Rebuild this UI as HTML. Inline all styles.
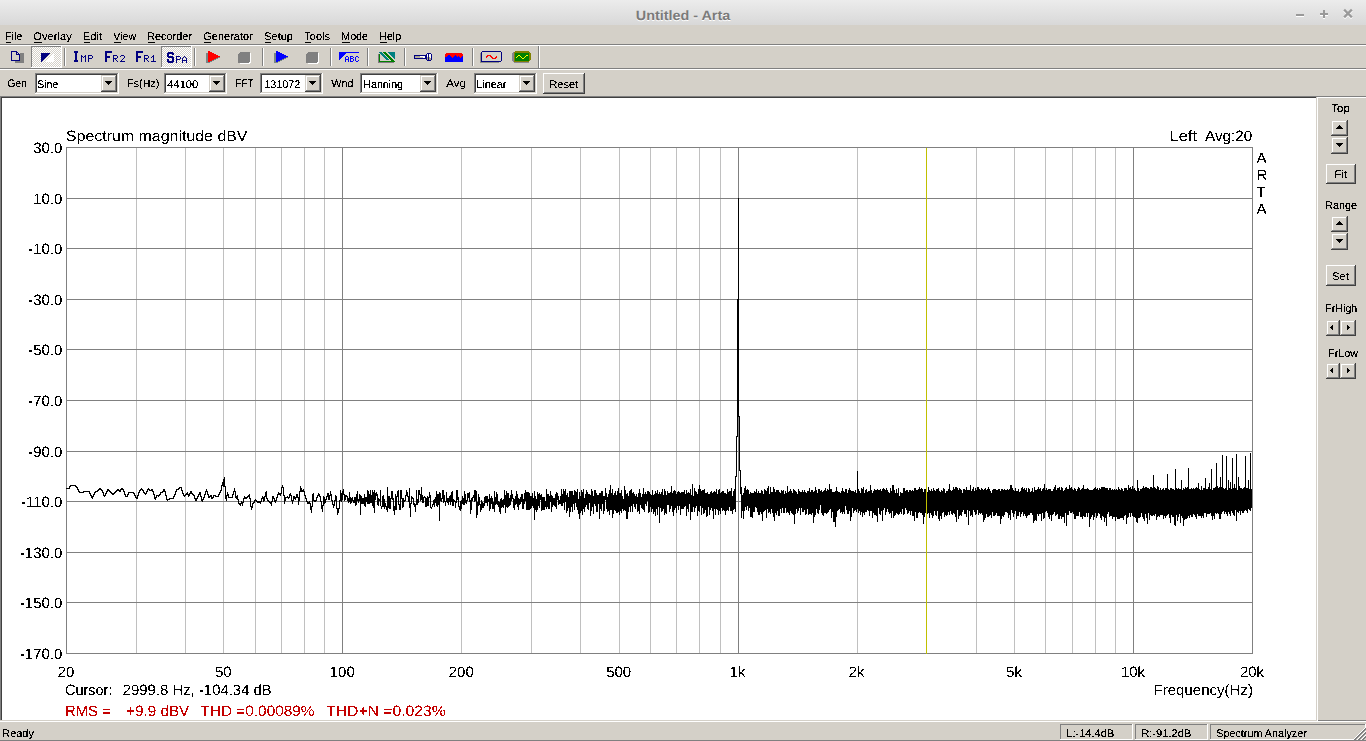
<!DOCTYPE html>
<html><head><meta charset="utf-8"><title>Untitled - Arta</title>
<style>
html,body{margin:0;padding:0;background:#d4d0c8;overflow:hidden}
svg{display:block;font-family:"Liberation Sans",sans-serif}
text{white-space:pre}
</style></head><body>
<svg width="1366" height="741" viewBox="0 0 1366 741" shape-rendering="crispEdges" text-rendering="geometricPrecision">
<defs>
<linearGradient id="tb" x1="0" y1="0" x2="0" y2="1"><stop offset="0" stop-color="#ececec"/><stop offset="1" stop-color="#d8d8d8"/></linearGradient>
<pattern id="chk" width="2" height="2" patternUnits="userSpaceOnUse"><rect width="2" height="2" fill="#d4d0c8"/><rect width="1" height="1" fill="#fff"/><rect x="1" y="1" width="1" height="1" fill="#fff"/></pattern>
<filter id="th" x="0" y="0" width="1" height="1" filterUnits="objectBoundingBox" color-interpolation-filters="sRGB"><feComponentTransfer><feFuncA type="discrete" tableValues="0 0 0 0 0 0 0 0 1 1 1 1 1 1 1 1 1 1 1 1"/></feComponentTransfer></filter>
<filter id="th2" x="0" y="0" width="1" height="1" color-interpolation-filters="sRGB"><feComponentTransfer><feFuncA type="discrete" tableValues="0 0 0 0 0 0 0 0 0 1 1 1 1 1 1 1 1 1 1 1"/></feComponentTransfer></filter>
</defs>
<rect x="0" y="0" width="1366" height="741" fill="#d4d0c8"/>
<rect x="0" y="0" width="1366" height="25" fill="url(#tb)"/>
<g shape-rendering="auto" id="ttl">
<text x="683" y="20.6" font-size="13.6" fill="#ffffff" text-anchor="middle" textLength="94.5" lengthAdjust="spacingAndGlyphs" font-weight="bold">Untitled - Arta</text>
<text x="683" y="19.6" font-size="13.6" fill="#7a7a7a" text-anchor="middle" textLength="94.5" lengthAdjust="spacingAndGlyphs" font-weight="bold">Untitled - Arta</text>
</g>
<rect x="1296" y="15" width="8" height="2" fill="#ffffff"/>
<rect x="1320" y="14" width="8" height="2" fill="#ffffff"/>
<rect x="1323" y="11" width="2" height="8" fill="#ffffff"/>
<path d="M1345 11.5 L1351 17.5 M1351 11.5 L1345 17.5" stroke="#ffffff" stroke-width="2.4" stroke-linecap="square" fill="none" shape-rendering="auto"/>
<rect x="1296" y="14" width="8" height="2" fill="#999999"/>
<rect x="1320" y="13" width="8" height="2" fill="#999999"/>
<rect x="1323" y="10" width="2" height="8" fill="#999999"/>
<path d="M1345 10.5 L1351 16.5 M1351 10.5 L1345 16.5" stroke="#999999" stroke-width="2.4" stroke-linecap="square" fill="none" shape-rendering="auto"/>
<g shape-rendering="auto" filter="url(#th)">
<text x="5.25" y="40" font-size="11" fill="#000" textLength="17.0" lengthAdjust="spacingAndGlyphs">File</text>
<text x="33.25" y="40" font-size="11" fill="#000" textLength="38.7" lengthAdjust="spacingAndGlyphs">Overlay</text>
<text x="83.25" y="40" font-size="11" fill="#000" textLength="18.7" lengthAdjust="spacingAndGlyphs">Edit</text>
<text x="113.25" y="40" font-size="11" fill="#000" textLength="23.1" lengthAdjust="spacingAndGlyphs">View</text>
<text x="147.25" y="40" font-size="11" fill="#000" textLength="44.6" lengthAdjust="spacingAndGlyphs">Recorder</text>
<text x="203.25" y="40" font-size="11" fill="#000" textLength="49.5" lengthAdjust="spacingAndGlyphs">Generator</text>
<text x="264.25" y="40" font-size="11" fill="#000" textLength="28.6" lengthAdjust="spacingAndGlyphs">Setup</text>
<text x="304.25" y="40" font-size="11" fill="#000" textLength="25.8" lengthAdjust="spacingAndGlyphs">Tools</text>
<text x="341.25" y="40" font-size="11" fill="#000" textLength="26.8" lengthAdjust="spacingAndGlyphs">Mode</text>
<text x="379.25" y="40" font-size="11" fill="#000" textLength="21.8" lengthAdjust="spacingAndGlyphs">Help</text>
</g>
<rect x="6" y="42" width="5" height="1" fill="#000"/>
<rect x="34" y="42" width="8" height="1" fill="#000"/>
<rect x="84" y="42" width="6" height="1" fill="#000"/>
<rect x="114" y="42" width="7" height="1" fill="#000"/>
<rect x="148" y="42" width="7" height="1" fill="#000"/>
<rect x="204" y="42" width="7" height="1" fill="#000"/>
<rect x="265" y="42" width="6" height="1" fill="#000"/>
<rect x="305" y="42" width="6" height="1" fill="#000"/>
<rect x="342" y="42" width="8" height="1" fill="#000"/>
<rect x="380" y="42" width="7" height="1" fill="#000"/>
<rect x="0" y="44" width="1366" height="1" fill="#808080"/>
<rect x="0" y="45" width="1366" height="1" fill="#ffffff"/>
<rect x="0" y="68" width="1366" height="1" fill="#808080"/>
<rect x="0" y="69" width="1366" height="1" fill="#ffffff"/>
<rect x="538" y="46" width="1" height="22" fill="#808080"/>
<rect x="539" y="46" width="1" height="22" fill="#ffffff"/>
<g shape-rendering="auto" filter="url(#th)">
<text x="7.25" y="87" font-size="11" fill="#000" textLength="19.7" lengthAdjust="spacingAndGlyphs">Gen</text>
</g>
<rect x="35" y="73" width="84" height="21" fill="#ffffff"/>
<rect x="35" y="73" width="83" height="1" fill="#808080"/>
<rect x="35" y="73" width="1" height="20" fill="#808080"/>
<rect x="36" y="74" width="81" height="1" fill="#404040"/>
<rect x="36" y="74" width="1" height="18" fill="#404040"/>
<rect x="35" y="93" width="84" height="1" fill="#ffffff"/>
<rect x="118" y="73" width="1" height="21" fill="#ffffff"/>
<rect x="36" y="92" width="82" height="1" fill="#d4d0c8"/>
<rect x="117" y="74" width="1" height="19" fill="#d4d0c8"/>
<rect x="101" y="75" width="16" height="17" fill="#d4d0c8"/>
<rect x="101" y="91" width="16" height="1" fill="#404040"/>
<rect x="116" y="75" width="1" height="17" fill="#404040"/>
<rect x="102" y="90" width="14" height="1" fill="#808080"/>
<rect x="115" y="76" width="1" height="15" fill="#808080"/>
<rect x="102" y="76" width="13" height="1" fill="#ffffff"/>
<rect x="102" y="76" width="1" height="14" fill="#ffffff"/>
<rect x="105" y="81" width="7" height="1" fill="#000"/>
<rect x="106" y="82" width="5" height="1" fill="#000"/>
<rect x="107" y="83" width="3" height="1" fill="#000"/>
<rect x="108" y="84" width="1" height="1" fill="#000"/>
<g shape-rendering="auto" filter="url(#th)">
<text x="37.25" y="88" font-size="11" fill="#000" textLength="21.0" lengthAdjust="spacingAndGlyphs">Sine</text>
</g>
<g shape-rendering="auto" filter="url(#th)">
<text x="127.25" y="87" font-size="11" fill="#000" textLength="32.0" lengthAdjust="spacingAndGlyphs">Fs(Hz)</text>
</g>
<rect x="164" y="73" width="63" height="21" fill="#ffffff"/>
<rect x="164" y="73" width="62" height="1" fill="#808080"/>
<rect x="164" y="73" width="1" height="20" fill="#808080"/>
<rect x="165" y="74" width="60" height="1" fill="#404040"/>
<rect x="165" y="74" width="1" height="18" fill="#404040"/>
<rect x="164" y="93" width="63" height="1" fill="#ffffff"/>
<rect x="226" y="73" width="1" height="21" fill="#ffffff"/>
<rect x="165" y="92" width="61" height="1" fill="#d4d0c8"/>
<rect x="225" y="74" width="1" height="19" fill="#d4d0c8"/>
<rect x="209" y="75" width="16" height="17" fill="#d4d0c8"/>
<rect x="209" y="91" width="16" height="1" fill="#404040"/>
<rect x="224" y="75" width="1" height="17" fill="#404040"/>
<rect x="210" y="90" width="14" height="1" fill="#808080"/>
<rect x="223" y="76" width="1" height="15" fill="#808080"/>
<rect x="210" y="76" width="13" height="1" fill="#ffffff"/>
<rect x="210" y="76" width="1" height="14" fill="#ffffff"/>
<rect x="213" y="81" width="7" height="1" fill="#000"/>
<rect x="214" y="82" width="5" height="1" fill="#000"/>
<rect x="215" y="83" width="3" height="1" fill="#000"/>
<rect x="216" y="84" width="1" height="1" fill="#000"/>
<g shape-rendering="auto" filter="url(#th)">
<text x="167.25" y="88" font-size="11" fill="#000" textLength="31.0" lengthAdjust="spacingAndGlyphs">44100</text>
</g>
<g shape-rendering="auto" filter="url(#th)">
<text x="235.25" y="87" font-size="11" fill="#000" textLength="18.6" lengthAdjust="spacingAndGlyphs">FFT</text>
</g>
<rect x="260" y="73" width="63" height="21" fill="#ffffff"/>
<rect x="260" y="73" width="62" height="1" fill="#808080"/>
<rect x="260" y="73" width="1" height="20" fill="#808080"/>
<rect x="261" y="74" width="60" height="1" fill="#404040"/>
<rect x="261" y="74" width="1" height="18" fill="#404040"/>
<rect x="260" y="93" width="63" height="1" fill="#ffffff"/>
<rect x="322" y="73" width="1" height="21" fill="#ffffff"/>
<rect x="261" y="92" width="61" height="1" fill="#d4d0c8"/>
<rect x="321" y="74" width="1" height="19" fill="#d4d0c8"/>
<rect x="305" y="75" width="16" height="17" fill="#d4d0c8"/>
<rect x="305" y="91" width="16" height="1" fill="#404040"/>
<rect x="320" y="75" width="1" height="17" fill="#404040"/>
<rect x="306" y="90" width="14" height="1" fill="#808080"/>
<rect x="319" y="76" width="1" height="15" fill="#808080"/>
<rect x="306" y="76" width="13" height="1" fill="#ffffff"/>
<rect x="306" y="76" width="1" height="14" fill="#ffffff"/>
<rect x="309" y="81" width="7" height="1" fill="#000"/>
<rect x="310" y="82" width="5" height="1" fill="#000"/>
<rect x="311" y="83" width="3" height="1" fill="#000"/>
<rect x="312" y="84" width="1" height="1" fill="#000"/>
<g shape-rendering="auto" filter="url(#th)">
<text x="264.25" y="88" font-size="11" fill="#000" textLength="36.1" lengthAdjust="spacingAndGlyphs">131072</text>
</g>
<g shape-rendering="auto" filter="url(#th)">
<text x="331.25" y="87" font-size="11" fill="#000" textLength="22.4" lengthAdjust="spacingAndGlyphs">Wnd</text>
</g>
<rect x="360" y="73" width="78" height="21" fill="#ffffff"/>
<rect x="360" y="73" width="77" height="1" fill="#808080"/>
<rect x="360" y="73" width="1" height="20" fill="#808080"/>
<rect x="361" y="74" width="75" height="1" fill="#404040"/>
<rect x="361" y="74" width="1" height="18" fill="#404040"/>
<rect x="360" y="93" width="78" height="1" fill="#ffffff"/>
<rect x="437" y="73" width="1" height="21" fill="#ffffff"/>
<rect x="361" y="92" width="76" height="1" fill="#d4d0c8"/>
<rect x="436" y="74" width="1" height="19" fill="#d4d0c8"/>
<rect x="420" y="75" width="16" height="17" fill="#d4d0c8"/>
<rect x="420" y="91" width="16" height="1" fill="#404040"/>
<rect x="435" y="75" width="1" height="17" fill="#404040"/>
<rect x="421" y="90" width="14" height="1" fill="#808080"/>
<rect x="434" y="76" width="1" height="15" fill="#808080"/>
<rect x="421" y="76" width="13" height="1" fill="#ffffff"/>
<rect x="421" y="76" width="1" height="14" fill="#ffffff"/>
<rect x="424" y="81" width="7" height="1" fill="#000"/>
<rect x="425" y="82" width="5" height="1" fill="#000"/>
<rect x="426" y="83" width="3" height="1" fill="#000"/>
<rect x="427" y="84" width="1" height="1" fill="#000"/>
<g shape-rendering="auto" filter="url(#th)">
<text x="363.25" y="88" font-size="11" fill="#000" textLength="39.8" lengthAdjust="spacingAndGlyphs">Hanning</text>
</g>
<g shape-rendering="auto" filter="url(#th)">
<text x="446.25" y="87" font-size="11" fill="#000" textLength="19.7" lengthAdjust="spacingAndGlyphs">Avg</text>
</g>
<rect x="474" y="73" width="63" height="21" fill="#ffffff"/>
<rect x="474" y="73" width="62" height="1" fill="#808080"/>
<rect x="474" y="73" width="1" height="20" fill="#808080"/>
<rect x="475" y="74" width="60" height="1" fill="#404040"/>
<rect x="475" y="74" width="1" height="18" fill="#404040"/>
<rect x="474" y="93" width="63" height="1" fill="#ffffff"/>
<rect x="536" y="73" width="1" height="21" fill="#ffffff"/>
<rect x="475" y="92" width="61" height="1" fill="#d4d0c8"/>
<rect x="535" y="74" width="1" height="19" fill="#d4d0c8"/>
<rect x="519" y="75" width="16" height="17" fill="#d4d0c8"/>
<rect x="519" y="91" width="16" height="1" fill="#404040"/>
<rect x="534" y="75" width="1" height="17" fill="#404040"/>
<rect x="520" y="90" width="14" height="1" fill="#808080"/>
<rect x="533" y="76" width="1" height="15" fill="#808080"/>
<rect x="520" y="76" width="13" height="1" fill="#ffffff"/>
<rect x="520" y="76" width="1" height="14" fill="#ffffff"/>
<rect x="523" y="81" width="7" height="1" fill="#000"/>
<rect x="524" y="82" width="5" height="1" fill="#000"/>
<rect x="525" y="83" width="3" height="1" fill="#000"/>
<rect x="526" y="84" width="1" height="1" fill="#000"/>
<g shape-rendering="auto" filter="url(#th)">
<text x="476.25" y="88" font-size="11" fill="#000" textLength="30.0" lengthAdjust="spacingAndGlyphs">Linear</text>
</g>
<rect x="543" y="73" width="41" height="1" fill="#ffffff"/>
<rect x="543" y="73" width="1" height="20" fill="#ffffff"/>
<rect x="543" y="93" width="42" height="1" fill="#404040"/>
<rect x="584" y="73" width="1" height="21" fill="#404040"/>
<rect x="544" y="92" width="40" height="1" fill="#808080"/>
<rect x="583" y="74" width="1" height="19" fill="#808080"/>
<g shape-rendering="auto" filter="url(#th)">
<text x="549.25" y="88" font-size="11" fill="#000" textLength="29.1" lengthAdjust="spacingAndGlyphs">Reset</text>
</g>
<rect x="0" y="96" width="1366" height="1" fill="#808080"/>
<rect x="0" y="97" width="1316" height="1" fill="#404040"/>
<rect x="1317" y="97" width="49" height="1" fill="#ffffff"/>
<rect x="0" y="96" width="1" height="626" fill="#808080"/>
<rect x="1" y="97" width="1" height="624" fill="#404040"/>
<rect x="2" y="98" width="1314" height="622" fill="#ffffff"/>
<rect x="1317" y="97" width="1" height="625" fill="#ffffff"/>
<rect x="0" y="720" width="1316" height="1" fill="#d4d0c8"/>
<rect x="1318" y="720" width="48" height="1" fill="#808080"/>
<rect x="0" y="721" width="1366" height="1" fill="#ffffff"/>
<g shape-rendering="auto" filter="url(#th)">
<text x="1331.25" y="112" font-size="11" fill="#000" textLength="18.7" lengthAdjust="spacingAndGlyphs">Top</text>
</g>
<rect x="1332" y="121" width="14" height="1" fill="#ffffff"/>
<rect x="1332" y="121" width="1" height="13" fill="#ffffff"/>
<rect x="1331" y="135" width="17" height="1" fill="#404040"/>
<rect x="1347" y="120" width="1" height="16" fill="#404040"/>
<rect x="1332" y="134" width="15" height="1" fill="#808080"/>
<rect x="1346" y="121" width="1" height="14" fill="#808080"/>
<rect x="1332" y="138" width="14" height="1" fill="#ffffff"/>
<rect x="1332" y="138" width="1" height="14" fill="#ffffff"/>
<rect x="1331" y="153" width="17" height="1" fill="#404040"/>
<rect x="1347" y="137" width="1" height="17" fill="#404040"/>
<rect x="1332" y="152" width="15" height="1" fill="#808080"/>
<rect x="1346" y="138" width="1" height="15" fill="#808080"/>
<rect x="1339" y="125" width="1" height="1" fill="#000"/>
<rect x="1338" y="126" width="3" height="1" fill="#000"/>
<rect x="1337" y="127" width="5" height="1" fill="#000"/>
<rect x="1336" y="128" width="7" height="1" fill="#000"/>
<rect x="1336" y="143" width="7" height="1" fill="#000"/>
<rect x="1337" y="144" width="5" height="1" fill="#000"/>
<rect x="1338" y="145" width="3" height="1" fill="#000"/>
<rect x="1339" y="146" width="1" height="1" fill="#000"/>
<rect x="1326" y="164" width="29" height="1" fill="#ffffff"/>
<rect x="1326" y="164" width="1" height="19" fill="#ffffff"/>
<rect x="1326" y="183" width="30" height="1" fill="#404040"/>
<rect x="1355" y="164" width="1" height="20" fill="#404040"/>
<rect x="1327" y="182" width="28" height="1" fill="#808080"/>
<rect x="1354" y="165" width="1" height="18" fill="#808080"/>
<g shape-rendering="auto" filter="url(#th)">
<text x="1334.25" y="178" font-size="11" fill="#000" textLength="12.9" lengthAdjust="spacingAndGlyphs">Fit</text>
</g>
<g shape-rendering="auto" filter="url(#th)">
<text x="1325.25" y="209" font-size="11" fill="#000" textLength="31.8" lengthAdjust="spacingAndGlyphs">Range</text>
</g>
<rect x="1332" y="217" width="14" height="1" fill="#ffffff"/>
<rect x="1332" y="217" width="1" height="13" fill="#ffffff"/>
<rect x="1331" y="231" width="17" height="1" fill="#404040"/>
<rect x="1347" y="216" width="1" height="16" fill="#404040"/>
<rect x="1332" y="230" width="15" height="1" fill="#808080"/>
<rect x="1346" y="217" width="1" height="14" fill="#808080"/>
<rect x="1332" y="234" width="14" height="1" fill="#ffffff"/>
<rect x="1332" y="234" width="1" height="14" fill="#ffffff"/>
<rect x="1331" y="249" width="17" height="1" fill="#404040"/>
<rect x="1347" y="233" width="1" height="17" fill="#404040"/>
<rect x="1332" y="248" width="15" height="1" fill="#808080"/>
<rect x="1346" y="234" width="1" height="15" fill="#808080"/>
<rect x="1339" y="221" width="1" height="1" fill="#000"/>
<rect x="1338" y="222" width="3" height="1" fill="#000"/>
<rect x="1337" y="223" width="5" height="1" fill="#000"/>
<rect x="1336" y="224" width="7" height="1" fill="#000"/>
<rect x="1336" y="239" width="7" height="1" fill="#000"/>
<rect x="1337" y="240" width="5" height="1" fill="#000"/>
<rect x="1338" y="241" width="3" height="1" fill="#000"/>
<rect x="1339" y="242" width="1" height="1" fill="#000"/>
<rect x="1326" y="265" width="29" height="1" fill="#ffffff"/>
<rect x="1326" y="265" width="1" height="20" fill="#ffffff"/>
<rect x="1326" y="285" width="30" height="1" fill="#404040"/>
<rect x="1355" y="265" width="1" height="21" fill="#404040"/>
<rect x="1327" y="284" width="28" height="1" fill="#808080"/>
<rect x="1354" y="266" width="1" height="19" fill="#808080"/>
<g shape-rendering="auto" filter="url(#th)">
<text x="1332.25" y="280" font-size="11" fill="#000" textLength="16.6" lengthAdjust="spacingAndGlyphs">Set</text>
</g>
<g shape-rendering="auto" filter="url(#th)">
<text x="1325.25" y="312" font-size="11" fill="#000" textLength="32.0" lengthAdjust="spacingAndGlyphs">FrHigh</text>
</g>
<rect x="1327" y="321" width="11" height="1" fill="#ffffff"/>
<rect x="1327" y="321" width="1" height="13" fill="#ffffff"/>
<rect x="1326" y="335" width="14" height="1" fill="#404040"/>
<rect x="1339" y="320" width="1" height="16" fill="#404040"/>
<rect x="1327" y="334" width="12" height="1" fill="#808080"/>
<rect x="1338" y="321" width="1" height="14" fill="#808080"/>
<rect x="1341" y="321" width="13" height="1" fill="#ffffff"/>
<rect x="1341" y="321" width="1" height="13" fill="#ffffff"/>
<rect x="1340" y="335" width="16" height="1" fill="#404040"/>
<rect x="1355" y="320" width="1" height="16" fill="#404040"/>
<rect x="1341" y="334" width="14" height="1" fill="#808080"/>
<rect x="1354" y="321" width="1" height="14" fill="#808080"/>
<rect x="1330" y="327" width="1" height="1" fill="#000"/>
<rect x="1349" y="327" width="1" height="1" fill="#000"/>
<rect x="1331" y="326" width="1" height="3" fill="#000"/>
<rect x="1348" y="326" width="1" height="3" fill="#000"/>
<rect x="1332" y="325" width="1" height="5" fill="#000"/>
<rect x="1347" y="325" width="1" height="5" fill="#000"/>
<g shape-rendering="auto" filter="url(#th)">
<text x="1328.25" y="357" font-size="11" fill="#000" textLength="29.7" lengthAdjust="spacingAndGlyphs">FrLow</text>
</g>
<rect x="1327" y="364" width="11" height="1" fill="#ffffff"/>
<rect x="1327" y="364" width="1" height="13" fill="#ffffff"/>
<rect x="1326" y="378" width="14" height="1" fill="#404040"/>
<rect x="1339" y="363" width="1" height="16" fill="#404040"/>
<rect x="1327" y="377" width="12" height="1" fill="#808080"/>
<rect x="1338" y="364" width="1" height="14" fill="#808080"/>
<rect x="1341" y="364" width="13" height="1" fill="#ffffff"/>
<rect x="1341" y="364" width="1" height="13" fill="#ffffff"/>
<rect x="1340" y="378" width="16" height="1" fill="#404040"/>
<rect x="1355" y="363" width="1" height="16" fill="#404040"/>
<rect x="1341" y="377" width="14" height="1" fill="#808080"/>
<rect x="1354" y="364" width="1" height="14" fill="#808080"/>
<rect x="1330" y="370" width="1" height="1" fill="#000"/>
<rect x="1349" y="370" width="1" height="1" fill="#000"/>
<rect x="1331" y="369" width="1" height="3" fill="#000"/>
<rect x="1348" y="369" width="1" height="3" fill="#000"/>
<rect x="1332" y="368" width="1" height="5" fill="#000"/>
<rect x="1347" y="368" width="1" height="5" fill="#000"/>
<rect x="0" y="740" width="1366" height="1" fill="#808080"/>
<g shape-rendering="auto" filter="url(#th)">
<text x="2.25" y="737" font-size="11" fill="#000" textLength="31.6" lengthAdjust="spacingAndGlyphs">Ready</text>
</g>
<rect x="1060" y="724" width="72" height="1" fill="#808080"/>
<rect x="1060" y="724" width="1" height="15" fill="#808080"/>
<rect x="1060" y="739" width="73" height="1" fill="#ffffff"/>
<rect x="1132" y="724" width="1" height="16" fill="#ffffff"/>
<g shape-rendering="auto" filter="url(#th)">
<text x="1066.25" y="737" font-size="11" fill="#000" textLength="48.0" lengthAdjust="spacingAndGlyphs">L:-14.4dB</text>
</g>
<rect x="1135" y="724" width="72" height="1" fill="#808080"/>
<rect x="1135" y="724" width="1" height="15" fill="#808080"/>
<rect x="1135" y="739" width="73" height="1" fill="#ffffff"/>
<rect x="1207" y="724" width="1" height="16" fill="#ffffff"/>
<g shape-rendering="auto" filter="url(#th)">
<text x="1141.25" y="737" font-size="11" fill="#000" textLength="50.1" lengthAdjust="spacingAndGlyphs">R:-91.2dB</text>
</g>
<rect x="1210" y="724" width="155" height="1" fill="#808080"/>
<rect x="1210" y="724" width="1" height="15" fill="#808080"/>
<rect x="1210" y="739" width="156" height="1" fill="#ffffff"/>
<rect x="1365" y="724" width="1" height="16" fill="#ffffff"/>
<g shape-rendering="auto" filter="url(#th)">
<text x="1216.25" y="737" font-size="11" fill="#000" textLength="90.6" lengthAdjust="spacingAndGlyphs">Spectrum Analyzer</text>
</g>
<rect x="1353" y="739" width="1" height="1" fill="#ffffff"/>
<rect x="1354" y="738" width="1" height="1" fill="#ffffff"/>
<rect x="1355" y="737" width="1" height="1" fill="#ffffff"/>
<rect x="1356" y="736" width="1" height="1" fill="#ffffff"/>
<rect x="1357" y="735" width="1" height="1" fill="#ffffff"/>
<rect x="1358" y="734" width="1" height="1" fill="#ffffff"/>
<rect x="1359" y="733" width="1" height="1" fill="#ffffff"/>
<rect x="1360" y="732" width="1" height="1" fill="#ffffff"/>
<rect x="1361" y="731" width="1" height="1" fill="#ffffff"/>
<rect x="1362" y="730" width="1" height="1" fill="#ffffff"/>
<rect x="1363" y="729" width="1" height="1" fill="#ffffff"/>
<rect x="1364" y="728" width="1" height="1" fill="#ffffff"/>
<rect x="1365" y="727" width="1" height="1" fill="#ffffff"/>
<rect x="1354" y="739" width="1" height="1" fill="#808080"/>
<rect x="1355" y="738" width="1" height="1" fill="#808080"/>
<rect x="1356" y="737" width="1" height="1" fill="#808080"/>
<rect x="1357" y="736" width="1" height="1" fill="#808080"/>
<rect x="1358" y="735" width="1" height="1" fill="#808080"/>
<rect x="1359" y="734" width="1" height="1" fill="#808080"/>
<rect x="1360" y="733" width="1" height="1" fill="#808080"/>
<rect x="1361" y="732" width="1" height="1" fill="#808080"/>
<rect x="1362" y="731" width="1" height="1" fill="#808080"/>
<rect x="1363" y="730" width="1" height="1" fill="#808080"/>
<rect x="1364" y="729" width="1" height="1" fill="#808080"/>
<rect x="1365" y="728" width="1" height="1" fill="#808080"/>
<rect x="1355" y="739" width="1" height="1" fill="#808080"/>
<rect x="1356" y="738" width="1" height="1" fill="#808080"/>
<rect x="1357" y="737" width="1" height="1" fill="#808080"/>
<rect x="1358" y="736" width="1" height="1" fill="#808080"/>
<rect x="1359" y="735" width="1" height="1" fill="#808080"/>
<rect x="1360" y="734" width="1" height="1" fill="#808080"/>
<rect x="1361" y="733" width="1" height="1" fill="#808080"/>
<rect x="1362" y="732" width="1" height="1" fill="#808080"/>
<rect x="1363" y="731" width="1" height="1" fill="#808080"/>
<rect x="1364" y="730" width="1" height="1" fill="#808080"/>
<rect x="1365" y="729" width="1" height="1" fill="#808080"/>
<rect x="1356" y="739" width="1" height="1" fill="#d4d0c8"/>
<rect x="1357" y="738" width="1" height="1" fill="#d4d0c8"/>
<rect x="1358" y="737" width="1" height="1" fill="#d4d0c8"/>
<rect x="1359" y="736" width="1" height="1" fill="#d4d0c8"/>
<rect x="1360" y="735" width="1" height="1" fill="#d4d0c8"/>
<rect x="1361" y="734" width="1" height="1" fill="#d4d0c8"/>
<rect x="1362" y="733" width="1" height="1" fill="#d4d0c8"/>
<rect x="1363" y="732" width="1" height="1" fill="#d4d0c8"/>
<rect x="1364" y="731" width="1" height="1" fill="#d4d0c8"/>
<rect x="1365" y="730" width="1" height="1" fill="#d4d0c8"/>
<rect x="1357" y="739" width="1" height="1" fill="#ffffff"/>
<rect x="1358" y="738" width="1" height="1" fill="#ffffff"/>
<rect x="1359" y="737" width="1" height="1" fill="#ffffff"/>
<rect x="1360" y="736" width="1" height="1" fill="#ffffff"/>
<rect x="1361" y="735" width="1" height="1" fill="#ffffff"/>
<rect x="1362" y="734" width="1" height="1" fill="#ffffff"/>
<rect x="1363" y="733" width="1" height="1" fill="#ffffff"/>
<rect x="1364" y="732" width="1" height="1" fill="#ffffff"/>
<rect x="1365" y="731" width="1" height="1" fill="#ffffff"/>
<rect x="1358" y="739" width="1" height="1" fill="#808080"/>
<rect x="1359" y="738" width="1" height="1" fill="#808080"/>
<rect x="1360" y="737" width="1" height="1" fill="#808080"/>
<rect x="1361" y="736" width="1" height="1" fill="#808080"/>
<rect x="1362" y="735" width="1" height="1" fill="#808080"/>
<rect x="1363" y="734" width="1" height="1" fill="#808080"/>
<rect x="1364" y="733" width="1" height="1" fill="#808080"/>
<rect x="1365" y="732" width="1" height="1" fill="#808080"/>
<rect x="1359" y="739" width="1" height="1" fill="#808080"/>
<rect x="1360" y="738" width="1" height="1" fill="#808080"/>
<rect x="1361" y="737" width="1" height="1" fill="#808080"/>
<rect x="1362" y="736" width="1" height="1" fill="#808080"/>
<rect x="1363" y="735" width="1" height="1" fill="#808080"/>
<rect x="1364" y="734" width="1" height="1" fill="#808080"/>
<rect x="1365" y="733" width="1" height="1" fill="#808080"/>
<rect x="1360" y="739" width="1" height="1" fill="#d4d0c8"/>
<rect x="1361" y="738" width="1" height="1" fill="#d4d0c8"/>
<rect x="1362" y="737" width="1" height="1" fill="#d4d0c8"/>
<rect x="1363" y="736" width="1" height="1" fill="#d4d0c8"/>
<rect x="1364" y="735" width="1" height="1" fill="#d4d0c8"/>
<rect x="1365" y="734" width="1" height="1" fill="#d4d0c8"/>
<rect x="1361" y="739" width="1" height="1" fill="#ffffff"/>
<rect x="1362" y="738" width="1" height="1" fill="#ffffff"/>
<rect x="1363" y="737" width="1" height="1" fill="#ffffff"/>
<rect x="1364" y="736" width="1" height="1" fill="#ffffff"/>
<rect x="1365" y="735" width="1" height="1" fill="#ffffff"/>
<rect x="1362" y="739" width="1" height="1" fill="#808080"/>
<rect x="1363" y="738" width="1" height="1" fill="#808080"/>
<rect x="1364" y="737" width="1" height="1" fill="#808080"/>
<rect x="1365" y="736" width="1" height="1" fill="#808080"/>
<rect x="1363" y="739" width="1" height="1" fill="#808080"/>
<rect x="1364" y="738" width="1" height="1" fill="#808080"/>
<rect x="1365" y="737" width="1" height="1" fill="#808080"/>
<rect x="1364" y="739" width="1" height="1" fill="#d4d0c8"/>
<rect x="1365" y="738" width="1" height="1" fill="#d4d0c8"/>
<rect x="1365" y="739" width="1" height="1" fill="#d4d0c8"/>
<rect x="20" y="53" width="4" height="10" fill="#808080"/>
<rect x="15" y="61" width="9" height="2" fill="#808080"/>
<rect x="11" y="51" width="6" height="1" fill="#000080"/>
<rect x="11" y="51" width="1" height="10" fill="#000080"/>
<rect x="11" y="60" width="9" height="1" fill="#000080"/>
<rect x="19" y="54" width="1" height="7" fill="#000080"/>
<rect x="17" y="52" width="1" height="1" fill="#000080"/>
<rect x="18" y="53" width="1" height="1" fill="#000080"/>
<rect x="16" y="51" width="1" height="4" fill="#000080"/>
<rect x="16" y="54" width="4" height="1" fill="#000080"/>
<rect x="32" y="47" width="29" height="20" fill="url(#chk)"/>
<rect x="31" y="46" width="30" height="1" fill="#808080"/>
<rect x="31" y="46" width="1" height="21" fill="#808080"/>
<rect x="31" y="67" width="31" height="1" fill="#ffffff"/>
<rect x="61" y="46" width="1" height="22" fill="#ffffff"/>
<rect x="41" y="53" width="9" height="1" fill="#000080"/>
<rect x="41" y="54" width="8" height="1" fill="#000080"/>
<rect x="41" y="55" width="7" height="1" fill="#000080"/>
<rect x="41" y="56" width="6" height="1" fill="#000080"/>
<rect x="41" y="57" width="5" height="1" fill="#000080"/>
<rect x="41" y="58" width="4" height="1" fill="#000080"/>
<rect x="41" y="59" width="3" height="1" fill="#000080"/>
<rect x="41" y="60" width="2" height="1" fill="#000080"/>
<rect x="41" y="61" width="1" height="1" fill="#000080"/>
<rect x="52" y="54" width="2" height="1" fill="#ffffff"/>
<rect x="51" y="55" width="3" height="1" fill="#ffffff"/>
<rect x="50" y="56" width="4" height="1" fill="#ffffff"/>
<rect x="49" y="57" width="5" height="1" fill="#ffffff"/>
<rect x="48" y="58" width="6" height="1" fill="#ffffff"/>
<rect x="47" y="59" width="7" height="1" fill="#ffffff"/>
<rect x="46" y="60" width="8" height="1" fill="#ffffff"/>
<rect x="45" y="61" width="9" height="1" fill="#ffffff"/>
<rect x="64" y="48" width="1" height="18" fill="#808080"/>
<rect x="65" y="48" width="1" height="18" fill="#ffffff"/>
<rect x="74" y="51" width="4" height="1" fill="#000080"/>
<rect x="74" y="52" width="4" height="1" fill="#000080"/>
<rect x="75" y="53" width="2" height="1" fill="#000080"/>
<rect x="75" y="54" width="2" height="1" fill="#000080"/>
<rect x="75" y="55" width="2" height="1" fill="#000080"/>
<rect x="75" y="56" width="2" height="1" fill="#000080"/>
<rect x="75" y="57" width="2" height="1" fill="#000080"/>
<rect x="75" y="58" width="2" height="1" fill="#000080"/>
<rect x="75" y="59" width="2" height="1" fill="#000080"/>
<rect x="74" y="60" width="4" height="1" fill="#000080"/>
<rect x="74" y="61" width="4" height="1" fill="#000080"/>
<rect x="81" y="55" width="1" height="1" fill="#000080"/>
<rect x="85" y="55" width="1" height="1" fill="#000080"/>
<rect x="81" y="56" width="2" height="1" fill="#000080"/>
<rect x="84" y="56" width="2" height="1" fill="#000080"/>
<rect x="81" y="57" width="1" height="1" fill="#000080"/>
<rect x="83" y="57" width="1" height="1" fill="#000080"/>
<rect x="85" y="57" width="1" height="1" fill="#000080"/>
<rect x="81" y="58" width="1" height="1" fill="#000080"/>
<rect x="85" y="58" width="1" height="1" fill="#000080"/>
<rect x="81" y="59" width="1" height="1" fill="#000080"/>
<rect x="85" y="59" width="1" height="1" fill="#000080"/>
<rect x="81" y="60" width="1" height="1" fill="#000080"/>
<rect x="85" y="60" width="1" height="1" fill="#000080"/>
<rect x="81" y="61" width="1" height="1" fill="#000080"/>
<rect x="85" y="61" width="1" height="1" fill="#000080"/>
<rect x="88" y="55" width="4" height="1" fill="#000080"/>
<rect x="88" y="56" width="1" height="1" fill="#000080"/>
<rect x="92" y="56" width="1" height="1" fill="#000080"/>
<rect x="88" y="57" width="1" height="1" fill="#000080"/>
<rect x="92" y="57" width="1" height="1" fill="#000080"/>
<rect x="88" y="58" width="4" height="1" fill="#000080"/>
<rect x="88" y="59" width="1" height="1" fill="#000080"/>
<rect x="88" y="60" width="1" height="1" fill="#000080"/>
<rect x="88" y="61" width="1" height="1" fill="#000080"/>
<rect x="105" y="51" width="7" height="1" fill="#000080"/>
<rect x="105" y="52" width="7" height="1" fill="#000080"/>
<rect x="105" y="53" width="2" height="1" fill="#000080"/>
<rect x="105" y="54" width="2" height="1" fill="#000080"/>
<rect x="105" y="55" width="2" height="1" fill="#000080"/>
<rect x="105" y="56" width="5" height="1" fill="#000080"/>
<rect x="105" y="57" width="5" height="1" fill="#000080"/>
<rect x="105" y="58" width="2" height="1" fill="#000080"/>
<rect x="105" y="59" width="2" height="1" fill="#000080"/>
<rect x="105" y="60" width="2" height="1" fill="#000080"/>
<rect x="105" y="61" width="2" height="1" fill="#000080"/>
<rect x="113" y="55" width="4" height="1" fill="#000080"/>
<rect x="113" y="56" width="1" height="1" fill="#000080"/>
<rect x="117" y="56" width="1" height="1" fill="#000080"/>
<rect x="113" y="57" width="1" height="1" fill="#000080"/>
<rect x="117" y="57" width="1" height="1" fill="#000080"/>
<rect x="113" y="58" width="4" height="1" fill="#000080"/>
<rect x="113" y="59" width="1" height="1" fill="#000080"/>
<rect x="115" y="59" width="1" height="1" fill="#000080"/>
<rect x="113" y="60" width="1" height="1" fill="#000080"/>
<rect x="116" y="60" width="1" height="1" fill="#000080"/>
<rect x="113" y="61" width="1" height="1" fill="#000080"/>
<rect x="117" y="61" width="1" height="1" fill="#000080"/>
<rect x="121" y="55" width="3" height="1" fill="#000080"/>
<rect x="120" y="56" width="1" height="1" fill="#000080"/>
<rect x="124" y="56" width="1" height="1" fill="#000080"/>
<rect x="124" y="57" width="1" height="1" fill="#000080"/>
<rect x="123" y="58" width="1" height="1" fill="#000080"/>
<rect x="122" y="59" width="1" height="1" fill="#000080"/>
<rect x="121" y="60" width="1" height="1" fill="#000080"/>
<rect x="120" y="61" width="5" height="1" fill="#000080"/>
<rect x="136" y="51" width="7" height="1" fill="#000080"/>
<rect x="136" y="52" width="7" height="1" fill="#000080"/>
<rect x="136" y="53" width="2" height="1" fill="#000080"/>
<rect x="136" y="54" width="2" height="1" fill="#000080"/>
<rect x="136" y="55" width="2" height="1" fill="#000080"/>
<rect x="136" y="56" width="5" height="1" fill="#000080"/>
<rect x="136" y="57" width="5" height="1" fill="#000080"/>
<rect x="136" y="58" width="2" height="1" fill="#000080"/>
<rect x="136" y="59" width="2" height="1" fill="#000080"/>
<rect x="136" y="60" width="2" height="1" fill="#000080"/>
<rect x="136" y="61" width="2" height="1" fill="#000080"/>
<rect x="144" y="55" width="4" height="1" fill="#000080"/>
<rect x="144" y="56" width="1" height="1" fill="#000080"/>
<rect x="148" y="56" width="1" height="1" fill="#000080"/>
<rect x="144" y="57" width="1" height="1" fill="#000080"/>
<rect x="148" y="57" width="1" height="1" fill="#000080"/>
<rect x="144" y="58" width="4" height="1" fill="#000080"/>
<rect x="144" y="59" width="1" height="1" fill="#000080"/>
<rect x="146" y="59" width="1" height="1" fill="#000080"/>
<rect x="144" y="60" width="1" height="1" fill="#000080"/>
<rect x="147" y="60" width="1" height="1" fill="#000080"/>
<rect x="144" y="61" width="1" height="1" fill="#000080"/>
<rect x="148" y="61" width="1" height="1" fill="#000080"/>
<rect x="153" y="55" width="1" height="1" fill="#000080"/>
<rect x="152" y="56" width="2" height="1" fill="#000080"/>
<rect x="151" y="57" width="1" height="1" fill="#000080"/>
<rect x="153" y="57" width="1" height="1" fill="#000080"/>
<rect x="153" y="58" width="1" height="1" fill="#000080"/>
<rect x="153" y="59" width="1" height="1" fill="#000080"/>
<rect x="153" y="60" width="1" height="1" fill="#000080"/>
<rect x="151" y="61" width="5" height="1" fill="#000080"/>
<rect x="162" y="47" width="29" height="20" fill="url(#chk)"/>
<rect x="161" y="46" width="30" height="1" fill="#808080"/>
<rect x="161" y="46" width="1" height="21" fill="#808080"/>
<rect x="161" y="67" width="31" height="1" fill="#ffffff"/>
<rect x="191" y="46" width="1" height="22" fill="#ffffff"/>
<rect x="168" y="52" width="5" height="1" fill="#000080"/>
<rect x="167" y="53" width="7" height="1" fill="#000080"/>
<rect x="167" y="54" width="2" height="1" fill="#000080"/>
<rect x="172" y="54" width="2" height="1" fill="#000080"/>
<rect x="167" y="55" width="2" height="1" fill="#000080"/>
<rect x="167" y="56" width="6" height="1" fill="#000080"/>
<rect x="168" y="57" width="6" height="1" fill="#000080"/>
<rect x="172" y="58" width="2" height="1" fill="#000080"/>
<rect x="167" y="59" width="2" height="1" fill="#000080"/>
<rect x="172" y="59" width="2" height="1" fill="#000080"/>
<rect x="167" y="60" width="2" height="1" fill="#000080"/>
<rect x="172" y="60" width="2" height="1" fill="#000080"/>
<rect x="167" y="61" width="7" height="1" fill="#000080"/>
<rect x="168" y="62" width="5" height="1" fill="#000080"/>
<rect x="176" y="56" width="4" height="1" fill="#000080"/>
<rect x="176" y="57" width="1" height="1" fill="#000080"/>
<rect x="180" y="57" width="1" height="1" fill="#000080"/>
<rect x="176" y="58" width="1" height="1" fill="#000080"/>
<rect x="180" y="58" width="1" height="1" fill="#000080"/>
<rect x="176" y="59" width="4" height="1" fill="#000080"/>
<rect x="176" y="60" width="1" height="1" fill="#000080"/>
<rect x="176" y="61" width="1" height="1" fill="#000080"/>
<rect x="176" y="62" width="1" height="1" fill="#000080"/>
<rect x="184" y="56" width="1" height="1" fill="#000080"/>
<rect x="183" y="57" width="1" height="1" fill="#000080"/>
<rect x="185" y="57" width="1" height="1" fill="#000080"/>
<rect x="182" y="58" width="1" height="1" fill="#000080"/>
<rect x="186" y="58" width="1" height="1" fill="#000080"/>
<rect x="182" y="59" width="1" height="1" fill="#000080"/>
<rect x="186" y="59" width="1" height="1" fill="#000080"/>
<rect x="182" y="60" width="5" height="1" fill="#000080"/>
<rect x="182" y="61" width="1" height="1" fill="#000080"/>
<rect x="186" y="61" width="1" height="1" fill="#000080"/>
<rect x="182" y="62" width="1" height="1" fill="#000080"/>
<rect x="186" y="62" width="1" height="1" fill="#000080"/>
<rect x="194" y="48" width="1" height="18" fill="#808080"/>
<rect x="195" y="48" width="1" height="18" fill="#ffffff"/>
<rect x="208" y="52" width="2" height="1" fill="#788686"/>
<rect x="208" y="53" width="4" height="1" fill="#788686"/>
<rect x="206" y="53" width="2" height="1" fill="#788686"/>
<rect x="208" y="54" width="6" height="1" fill="#788686"/>
<rect x="206" y="54" width="2" height="1" fill="#788686"/>
<rect x="208" y="55" width="8" height="1" fill="#788686"/>
<rect x="206" y="55" width="2" height="1" fill="#788686"/>
<rect x="208" y="56" width="10" height="1" fill="#788686"/>
<rect x="206" y="56" width="2" height="1" fill="#788686"/>
<rect x="208" y="57" width="12" height="1" fill="#788686"/>
<rect x="206" y="57" width="2" height="1" fill="#788686"/>
<rect x="208" y="58" width="10" height="1" fill="#788686"/>
<rect x="206" y="58" width="2" height="1" fill="#788686"/>
<rect x="208" y="59" width="8" height="1" fill="#788686"/>
<rect x="206" y="59" width="2" height="1" fill="#788686"/>
<rect x="208" y="60" width="6" height="1" fill="#788686"/>
<rect x="206" y="60" width="2" height="1" fill="#788686"/>
<rect x="208" y="61" width="4" height="1" fill="#788686"/>
<rect x="206" y="61" width="2" height="1" fill="#788686"/>
<rect x="208" y="62" width="2" height="1" fill="#788686"/>
<rect x="206" y="62" width="2" height="1" fill="#788686"/>
<rect x="208" y="51" width="2" height="1" fill="#ff0000"/>
<rect x="208" y="52" width="4" height="1" fill="#ff0000"/>
<rect x="208" y="53" width="6" height="1" fill="#ff0000"/>
<rect x="208" y="54" width="8" height="1" fill="#ff0000"/>
<rect x="208" y="55" width="10" height="1" fill="#ff0000"/>
<rect x="208" y="56" width="12" height="1" fill="#ff0000"/>
<rect x="208" y="57" width="10" height="1" fill="#ff0000"/>
<rect x="208" y="58" width="8" height="1" fill="#ff0000"/>
<rect x="208" y="59" width="6" height="1" fill="#ff0000"/>
<rect x="208" y="60" width="4" height="1" fill="#ff0000"/>
<rect x="208" y="61" width="2" height="1" fill="#ff0000"/>
<rect x="239" y="53" width="12" height="11" fill="#ffffff"/>
<rect x="250" y="63" width="1" height="1" fill="#d4d0c8"/>
<rect x="239" y="63" width="1" height="1" fill="#d4d0c8"/>
<rect x="238" y="52" width="12" height="11" fill="#808080"/>
<rect x="238" y="52" width="2" height="1" fill="#d4d0c8"/>
<rect x="238" y="53" width="1" height="1" fill="#d4d0c8"/>
<rect x="249" y="62" width="1" height="1" fill="#ffffff"/>
<rect x="262" y="48" width="1" height="18" fill="#808080"/>
<rect x="263" y="48" width="1" height="18" fill="#ffffff"/>
<rect x="276" y="52" width="2" height="1" fill="#788686"/>
<rect x="276" y="53" width="4" height="1" fill="#788686"/>
<rect x="274" y="53" width="2" height="1" fill="#788686"/>
<rect x="276" y="54" width="6" height="1" fill="#788686"/>
<rect x="274" y="54" width="2" height="1" fill="#788686"/>
<rect x="276" y="55" width="8" height="1" fill="#788686"/>
<rect x="274" y="55" width="2" height="1" fill="#788686"/>
<rect x="276" y="56" width="10" height="1" fill="#788686"/>
<rect x="274" y="56" width="2" height="1" fill="#788686"/>
<rect x="276" y="57" width="12" height="1" fill="#788686"/>
<rect x="274" y="57" width="2" height="1" fill="#788686"/>
<rect x="276" y="58" width="10" height="1" fill="#788686"/>
<rect x="274" y="58" width="2" height="1" fill="#788686"/>
<rect x="276" y="59" width="8" height="1" fill="#788686"/>
<rect x="274" y="59" width="2" height="1" fill="#788686"/>
<rect x="276" y="60" width="6" height="1" fill="#788686"/>
<rect x="274" y="60" width="2" height="1" fill="#788686"/>
<rect x="276" y="61" width="4" height="1" fill="#788686"/>
<rect x="274" y="61" width="2" height="1" fill="#788686"/>
<rect x="276" y="62" width="2" height="1" fill="#788686"/>
<rect x="274" y="62" width="2" height="1" fill="#788686"/>
<rect x="276" y="51" width="2" height="1" fill="#0000ff"/>
<rect x="276" y="52" width="4" height="1" fill="#0000ff"/>
<rect x="276" y="53" width="6" height="1" fill="#0000ff"/>
<rect x="276" y="54" width="8" height="1" fill="#0000ff"/>
<rect x="276" y="55" width="10" height="1" fill="#0000ff"/>
<rect x="276" y="56" width="12" height="1" fill="#0000ff"/>
<rect x="276" y="57" width="10" height="1" fill="#0000ff"/>
<rect x="276" y="58" width="8" height="1" fill="#0000ff"/>
<rect x="276" y="59" width="6" height="1" fill="#0000ff"/>
<rect x="276" y="60" width="4" height="1" fill="#0000ff"/>
<rect x="276" y="61" width="2" height="1" fill="#0000ff"/>
<rect x="307" y="53" width="12" height="11" fill="#ffffff"/>
<rect x="318" y="63" width="1" height="1" fill="#d4d0c8"/>
<rect x="307" y="63" width="1" height="1" fill="#d4d0c8"/>
<rect x="306" y="52" width="12" height="11" fill="#808080"/>
<rect x="306" y="52" width="2" height="1" fill="#d4d0c8"/>
<rect x="306" y="53" width="1" height="1" fill="#d4d0c8"/>
<rect x="317" y="62" width="1" height="1" fill="#ffffff"/>
<rect x="330" y="48" width="1" height="18" fill="#808080"/>
<rect x="331" y="48" width="1" height="18" fill="#ffffff"/>
<rect x="339" y="52" width="20" height="1" fill="#0000ff"/>
<rect x="339" y="53" width="7" height="1" fill="#0000ff"/>
<rect x="339" y="54" width="6" height="1" fill="#0000ff"/>
<rect x="339" y="55" width="5" height="1" fill="#0000ff"/>
<rect x="339" y="56" width="4" height="1" fill="#0000ff"/>
<rect x="339" y="57" width="3" height="1" fill="#0000ff"/>
<rect x="339" y="58" width="2" height="1" fill="#0000ff"/>
<rect x="339" y="59" width="1" height="1" fill="#0000ff"/>
<rect x="346" y="56" width="2" height="1" fill="#0000ff"/>
<rect x="345" y="57" width="1" height="1" fill="#0000ff"/>
<rect x="348" y="57" width="1" height="1" fill="#0000ff"/>
<rect x="345" y="58" width="1" height="1" fill="#0000ff"/>
<rect x="348" y="58" width="1" height="1" fill="#0000ff"/>
<rect x="345" y="59" width="4" height="1" fill="#0000ff"/>
<rect x="345" y="60" width="1" height="1" fill="#0000ff"/>
<rect x="348" y="60" width="1" height="1" fill="#0000ff"/>
<rect x="345" y="61" width="1" height="1" fill="#0000ff"/>
<rect x="348" y="61" width="1" height="1" fill="#0000ff"/>
<rect x="350" y="56" width="3" height="1" fill="#0000ff"/>
<rect x="350" y="57" width="1" height="1" fill="#0000ff"/>
<rect x="353" y="57" width="1" height="1" fill="#0000ff"/>
<rect x="350" y="58" width="3" height="1" fill="#0000ff"/>
<rect x="350" y="59" width="1" height="1" fill="#0000ff"/>
<rect x="353" y="59" width="1" height="1" fill="#0000ff"/>
<rect x="350" y="60" width="1" height="1" fill="#0000ff"/>
<rect x="353" y="60" width="1" height="1" fill="#0000ff"/>
<rect x="350" y="61" width="3" height="1" fill="#0000ff"/>
<rect x="356" y="56" width="2" height="1" fill="#0000ff"/>
<rect x="355" y="57" width="1" height="1" fill="#0000ff"/>
<rect x="358" y="57" width="1" height="1" fill="#0000ff"/>
<rect x="355" y="58" width="1" height="1" fill="#0000ff"/>
<rect x="355" y="59" width="1" height="1" fill="#0000ff"/>
<rect x="355" y="60" width="1" height="1" fill="#0000ff"/>
<rect x="358" y="60" width="1" height="1" fill="#0000ff"/>
<rect x="356" y="61" width="2" height="1" fill="#0000ff"/>
<rect x="367" y="48" width="1" height="18" fill="#808080"/>
<rect x="368" y="48" width="1" height="18" fill="#ffffff"/>
<rect x="378" y="54" width="1" height="9" fill="#807880"/>
<rect x="378" y="62" width="16" height="1" fill="#807880"/>
<rect x="379" y="54" width="1" height="8" fill="#008000"/>
<rect x="379" y="61" width="16" height="1" fill="#008000"/>
<rect x="379" y="52" width="3" height="1" fill="#008080"/>
<rect x="380" y="53" width="3" height="1" fill="#008080"/>
<rect x="381" y="54" width="3" height="1" fill="#008080"/>
<rect x="382" y="55" width="3" height="1" fill="#008080"/>
<rect x="383" y="56" width="3" height="1" fill="#008080"/>
<rect x="384" y="57" width="3" height="1" fill="#008080"/>
<rect x="385" y="58" width="3" height="1" fill="#008080"/>
<rect x="386" y="59" width="3" height="1" fill="#008080"/>
<rect x="383" y="52" width="3" height="1" fill="#008000"/>
<rect x="384" y="53" width="3" height="1" fill="#008000"/>
<rect x="385" y="54" width="3" height="1" fill="#008000"/>
<rect x="386" y="55" width="3" height="1" fill="#008000"/>
<rect x="387" y="56" width="3" height="1" fill="#008000"/>
<rect x="388" y="57" width="3" height="1" fill="#008000"/>
<rect x="389" y="58" width="3" height="1" fill="#008000"/>
<rect x="390" y="59" width="3" height="1" fill="#008000"/>
<rect x="391" y="60" width="3" height="1" fill="#008000"/>
<rect x="392" y="61" width="3" height="1" fill="#008000"/>
<rect x="388" y="52" width="7" height="1" fill="#008080"/>
<rect x="389" y="53" width="6" height="1" fill="#008080"/>
<rect x="390" y="54" width="5" height="1" fill="#008080"/>
<rect x="391" y="55" width="4" height="1" fill="#008080"/>
<rect x="392" y="56" width="3" height="1" fill="#008080"/>
<rect x="393" y="57" width="2" height="1" fill="#008080"/>
<rect x="394" y="58" width="1" height="1" fill="#008080"/>
<rect x="404" y="48" width="1" height="18" fill="#808080"/>
<rect x="405" y="48" width="1" height="18" fill="#ffffff"/>
<rect x="414" y="55" width="12" height="4" fill="#000080"/>
<rect x="415" y="56" width="5" height="1" fill="#a8a48c"/>
<rect x="420" y="56" width="5" height="1" fill="#ffffff"/>
<rect x="415" y="57" width="8" height="1" fill="#b8b4a0"/>
<rect x="423" y="57" width="2" height="1" fill="#ffffff"/>
<rect x="426" y="54" width="6" height="6" fill="#000080"/>
<rect x="427" y="53" width="4" height="1" fill="#000080"/>
<rect x="427" y="60" width="4" height="1" fill="#000080"/>
<rect x="427" y="54" width="1" height="3" fill="#ffffff"/>
<rect x="427" y="57" width="1" height="3" fill="#a8a48c"/>
<rect x="429" y="54" width="2" height="4" fill="#ffffff"/>
<rect x="429" y="58" width="2" height="2" fill="#a8a48c"/>
<rect x="429" y="57" width="1" height="1" fill="#a8a48c"/>
<rect x="445" y="54" width="18" height="8" fill="#ff0000"/>
<rect x="446" y="53" width="16" height="1" fill="#ff0000"/>
<rect x="445" y="57" width="1" height="5" fill="#0000ff"/>
<rect x="446" y="57" width="1" height="5" fill="#0000ff"/>
<rect x="447" y="56" width="1" height="6" fill="#0000ff"/>
<rect x="448" y="55" width="1" height="7" fill="#0000ff"/>
<rect x="449" y="55" width="1" height="7" fill="#0000ff"/>
<rect x="450" y="56" width="1" height="6" fill="#0000ff"/>
<rect x="451" y="57" width="1" height="5" fill="#0000ff"/>
<rect x="452" y="58" width="1" height="4" fill="#0000ff"/>
<rect x="453" y="57" width="1" height="5" fill="#0000ff"/>
<rect x="454" y="56" width="1" height="6" fill="#0000ff"/>
<rect x="455" y="55" width="1" height="7" fill="#0000ff"/>
<rect x="456" y="56" width="1" height="6" fill="#0000ff"/>
<rect x="457" y="57" width="1" height="5" fill="#0000ff"/>
<rect x="458" y="56" width="1" height="6" fill="#0000ff"/>
<rect x="459" y="57" width="1" height="5" fill="#0000ff"/>
<rect x="460" y="58" width="1" height="4" fill="#0000ff"/>
<rect x="461" y="57" width="1" height="5" fill="#0000ff"/>
<rect x="462" y="56" width="1" height="6" fill="#0000ff"/>
<rect x="472" y="48" width="1" height="18" fill="#808080"/>
<rect x="473" y="48" width="1" height="18" fill="#ffffff"/>
<rect x="480" y="53" width="1" height="10" fill="#909088"/>
<rect x="480" y="62" width="19" height="1" fill="#909088"/>
<rect x="482" y="51" width="19" height="1" fill="#000080"/>
<rect x="481" y="61" width="20" height="1" fill="#000080"/>
<rect x="481" y="52" width="1" height="10" fill="#000080"/>
<rect x="501" y="52" width="1" height="9" fill="#000080"/>
<rect x="486" y="56" width="1" height="2" fill="#ff0000"/>
<rect x="487" y="55" width="1" height="2" fill="#ff0000"/>
<rect x="488" y="55" width="1" height="1" fill="#ff0000"/>
<rect x="489" y="55" width="1" height="1" fill="#ff0000"/>
<rect x="490" y="55" width="1" height="2" fill="#ff0000"/>
<rect x="491" y="56" width="1" height="2" fill="#ff0000"/>
<rect x="492" y="57" width="1" height="2" fill="#ff0000"/>
<rect x="493" y="58" width="1" height="1" fill="#ff0000"/>
<rect x="494" y="58" width="1" height="1" fill="#ff0000"/>
<rect x="495" y="57" width="1" height="2" fill="#ff0000"/>
<rect x="496" y="56" width="1" height="2" fill="#ff0000"/>
<rect x="512" y="53" width="1" height="8" fill="#888890"/>
<rect x="513" y="52" width="1" height="10" fill="#888890"/>
<rect x="514" y="62" width="15" height="1" fill="#888890"/>
<rect x="514" y="51" width="15" height="11" fill="#808000"/>
<rect x="529" y="52" width="1" height="9" fill="#808000"/>
<rect x="530" y="53" width="1" height="7" fill="#808000"/>
<rect x="514" y="51" width="1" height="1" fill="#d4d0c8"/>
<rect x="515" y="53" width="14" height="8" fill="#008000"/>
<rect x="516" y="57" width="1" height="1" fill="#ffff00"/>
<rect x="517" y="56" width="1" height="1" fill="#ffff00"/>
<rect x="518" y="55" width="1" height="1" fill="#ffff00"/>
<rect x="519" y="55" width="1" height="1" fill="#ffff00"/>
<rect x="520" y="56" width="1" height="1" fill="#ffff00"/>
<rect x="521" y="57" width="1" height="1" fill="#ffff00"/>
<rect x="522" y="58" width="1" height="1" fill="#ffff00"/>
<rect x="523" y="58" width="1" height="1" fill="#ffff00"/>
<rect x="524" y="57" width="1" height="1" fill="#ffff00"/>
<rect x="525" y="56" width="1" height="1" fill="#ffff00"/>
<rect x="526" y="55" width="1" height="1" fill="#ffff00"/>
<rect x="527" y="55" width="1" height="1" fill="#ffff00"/>
<rect x="136" y="147" width="1" height="507" fill="#c0c0c0"/>
<rect x="185" y="147" width="1" height="507" fill="#c0c0c0"/>
<rect x="223" y="147" width="1" height="507" fill="#c0c0c0"/>
<rect x="255" y="147" width="1" height="507" fill="#c0c0c0"/>
<rect x="281" y="147" width="1" height="507" fill="#c0c0c0"/>
<rect x="304" y="147" width="1" height="507" fill="#c0c0c0"/>
<rect x="324" y="147" width="1" height="507" fill="#c0c0c0"/>
<rect x="461" y="147" width="1" height="507" fill="#c0c0c0"/>
<rect x="531" y="147" width="1" height="507" fill="#c0c0c0"/>
<rect x="580" y="147" width="1" height="507" fill="#c0c0c0"/>
<rect x="619" y="147" width="1" height="507" fill="#c0c0c0"/>
<rect x="650" y="147" width="1" height="507" fill="#c0c0c0"/>
<rect x="676" y="147" width="1" height="507" fill="#c0c0c0"/>
<rect x="699" y="147" width="1" height="507" fill="#c0c0c0"/>
<rect x="720" y="147" width="1" height="507" fill="#c0c0c0"/>
<rect x="857" y="147" width="1" height="507" fill="#c0c0c0"/>
<rect x="926" y="147" width="1" height="507" fill="#c0c0c0"/>
<rect x="976" y="147" width="1" height="507" fill="#c0c0c0"/>
<rect x="1014" y="147" width="1" height="507" fill="#c0c0c0"/>
<rect x="1045" y="147" width="1" height="507" fill="#c0c0c0"/>
<rect x="1072" y="147" width="1" height="507" fill="#c0c0c0"/>
<rect x="1095" y="147" width="1" height="507" fill="#c0c0c0"/>
<rect x="1115" y="147" width="1" height="507" fill="#c0c0c0"/>
<rect x="66" y="147" width="1187" height="1" fill="#808080"/>
<rect x="66" y="198" width="1187" height="1" fill="#808080"/>
<rect x="66" y="248" width="1187" height="1" fill="#808080"/>
<rect x="66" y="299" width="1187" height="1" fill="#808080"/>
<rect x="66" y="349" width="1187" height="1" fill="#808080"/>
<rect x="66" y="400" width="1187" height="1" fill="#808080"/>
<rect x="66" y="451" width="1187" height="1" fill="#808080"/>
<rect x="66" y="501" width="1187" height="1" fill="#808080"/>
<rect x="66" y="552" width="1187" height="1" fill="#808080"/>
<rect x="66" y="602" width="1187" height="1" fill="#808080"/>
<rect x="66" y="653" width="1187" height="1" fill="#808080"/>
<rect x="342" y="147" width="1" height="507" fill="#808080"/>
<rect x="738" y="147" width="1" height="507" fill="#808080"/>
<rect x="1133" y="147" width="1" height="507" fill="#808080"/>
<rect x="66" y="147" width="1" height="507" fill="#808080"/>
<rect x="1252" y="147" width="1" height="507" fill="#808080"/>
<g shape-rendering="auto" font-size="15" filter="url(#th2)">
<text x="62.4" y="153" font-size="15" fill="#000" text-anchor="end">30.0</text>
<text x="62.4" y="204" font-size="15" fill="#000" text-anchor="end">10.0</text>
<text x="62.4" y="254" font-size="15" fill="#000" text-anchor="end">-10.0</text>
<text x="62.4" y="305" font-size="15" fill="#000" text-anchor="end">-30.0</text>
<text x="62.4" y="355" font-size="15" fill="#000" text-anchor="end">-50.0</text>
<text x="62.4" y="406" font-size="15" fill="#000" text-anchor="end">-70.0</text>
<text x="62.4" y="457" font-size="15" fill="#000" text-anchor="end">-90.0</text>
<text x="62.4" y="507" font-size="15" fill="#000" text-anchor="end">-110.0</text>
<text x="62.4" y="558" font-size="15" fill="#000" text-anchor="end">-130.0</text>
<text x="62.4" y="608" font-size="15" fill="#000" text-anchor="end">-150.0</text>
<text x="62.4" y="659" font-size="15" fill="#000" text-anchor="end">-170.0</text>
<text x="66.0" y="677" font-size="15" fill="#000" text-anchor="middle">20</text>
<text x="223.3" y="677" font-size="15" fill="#000" text-anchor="middle">50</text>
<text x="342.3" y="677" font-size="15" fill="#000" text-anchor="middle">100</text>
<text x="461.3" y="677" font-size="15" fill="#000" text-anchor="middle">200</text>
<text x="618.7" y="677" font-size="15" fill="#000" text-anchor="middle">500</text>
<text x="737.7" y="677" font-size="15" fill="#000" text-anchor="middle">1k</text>
<text x="856.7" y="677" font-size="15" fill="#000" text-anchor="middle">2k</text>
<text x="1014.0" y="677" font-size="15" fill="#000" text-anchor="middle">5k</text>
<text x="1133.0" y="677" font-size="15" fill="#000" text-anchor="middle">10k</text>
<text x="1252.0" y="677" font-size="15" fill="#000" text-anchor="middle">20k</text>
<text x="66.0" y="141" font-size="15" fill="#000" textLength="181.5" lengthAdjust="spacingAndGlyphs">Spectrum magnitude dBV</text>
<text x="1169.5" y="141" font-size="15" fill="#000" textLength="27.5" lengthAdjust="spacingAndGlyphs">Left</text>
<text x="1205.0" y="141" font-size="15" fill="#000" textLength="47.2" lengthAdjust="spacingAndGlyphs">Avg:20</text>
<text x="1256.6" y="163" font-size="15" fill="#000">A</text>
<text x="1256.6" y="180" font-size="15" fill="#000">R</text>
<text x="1256.6" y="197" font-size="15" fill="#000">T</text>
<text x="1256.6" y="214" font-size="15" fill="#000">A</text>
<text x="1153.6" y="695" font-size="15" fill="#000" textLength="99.3" lengthAdjust="spacingAndGlyphs">Frequency(Hz)</text>
<text x="65.0" y="695" font-size="15" fill="#000" textLength="47.4" lengthAdjust="spacingAndGlyphs">Cursor:</text>
<text x="122.7" y="695" font-size="15" fill="#000" textLength="149.1" lengthAdjust="spacingAndGlyphs">2999.8 Hz, -104.34 dB</text>
<text x="65.0" y="716" font-size="15" fill="#c40000" textLength="45.6" lengthAdjust="spacingAndGlyphs">RMS =</text>
<text x="126.0" y="716" font-size="15" fill="#c40000" textLength="63.3" lengthAdjust="spacingAndGlyphs">+9.9 dBV</text>
<text x="200.5" y="716" font-size="15" fill="#c40000" textLength="114.0" lengthAdjust="spacingAndGlyphs">THD =0.00089%</text>
<text x="326.2" y="716" font-size="15" fill="#c40000" textLength="119.6" lengthAdjust="spacingAndGlyphs">THD+N =0.023%</text>
</g>
<path d="M66.5 488V489M67.5 488V489M68.5 488V489M69.5 486V489M70.5 485V487M71.5 485V486M72.5 485V486M73.5 485V486M74.5 485V486M75.5 485V487M76.5 486V488M77.5 487V490M78.5 489V492M79.5 491V493M80.5 492V493M81.5 492V493M82.5 492V493M83.5 491V493M84.5 491V492M85.5 491V492M86.5 491V492M87.5 491V492M88.5 491V492M89.5 491V494M90.5 493V496M91.5 495V498M92.5 496V499M93.5 494V497M94.5 492V495M95.5 491V493M96.5 491V492M97.5 490V492M98.5 489V491M99.5 488V490M100.5 488V490M101.5 489V491M102.5 490V493M103.5 492V496M104.5 495V497M105.5 493V496M106.5 491V494M107.5 489V492M108.5 489V491M109.5 490V492M110.5 491V493M111.5 492V494M112.5 493V495M113.5 493V495M114.5 492V494M115.5 491V493M116.5 490V492M117.5 489V491M118.5 489V491M119.5 490V492M120.5 489V492M121.5 488V490M122.5 488V490M123.5 489V492M124.5 491V495M125.5 494V497M126.5 496V497M127.5 494V497M128.5 492V495M129.5 492V493M130.5 492V493M131.5 492V493M132.5 492V493M133.5 492V494M134.5 493V496M135.5 495V498M136.5 497V499M137.5 495V499M138.5 492V496M139.5 490V493M140.5 489V491M141.5 488V490M142.5 489V491M143.5 490V493M144.5 492V494M145.5 493V495M146.5 491V494M147.5 489V492M148.5 488V490M149.5 489V491M150.5 490V491M151.5 489V491M152.5 489V492M153.5 491V495M154.5 494V499M155.5 497V500M156.5 495V498M157.5 495V496M158.5 495V497M159.5 494V496M160.5 492V495M161.5 492V493M162.5 491V493M163.5 489V492M164.5 489V492M165.5 491V496M166.5 495V500M167.5 499V501M168.5 499V500M169.5 498V500M170.5 498V499M171.5 498V499M172.5 498V499M173.5 496V499M174.5 494V497M175.5 491V495M176.5 489V492M177.5 489V490M178.5 488V490M179.5 487V489M180.5 487V488M181.5 487V491M182.5 490V494M183.5 493V496M184.5 495V497M185.5 494V496M186.5 493V495M187.5 492V495M188.5 494V497M189.5 493V496M190.5 491V494M191.5 491V494M192.5 493V495M193.5 494V496M194.5 495V499M195.5 498V501M196.5 498V501M197.5 496V499M198.5 494V497M199.5 492V495M200.5 492V497M201.5 496V501M202.5 499V502M203.5 497V500M204.5 494V498M205.5 491V495M206.5 489V492M207.5 491V495M208.5 494V498M209.5 496V498M210.5 495V497M211.5 495V499M212.5 497V499M213.5 495V498M214.5 495V496M215.5 495V497M216.5 496V497M217.5 496V497M218.5 494V497M219.5 492V495M220.5 490V493M221.5 485V491M222.5 482V486M223.5 479V487M224.5 477V487M225.5 486V499M226.5 495V501M227.5 492V496M228.5 494V498M229.5 497V498M230.5 497V498M231.5 497V498M232.5 494V498M233.5 491V495M234.5 488V492M235.5 491V498M236.5 496V499M237.5 495V500M238.5 499V504M239.5 503V505M240.5 503V506M241.5 501V504M242.5 502V506M243.5 498V503M244.5 496V499M245.5 497V499M246.5 497V499M247.5 496V498M248.5 495V497M249.5 494V499M250.5 498V507M251.5 506V510M252.5 503V508M253.5 502V504M254.5 500V503M255.5 499V501M256.5 500V502M257.5 501V503M258.5 501V503M259.5 501V503M260.5 501V504M261.5 498V502M262.5 496V499M263.5 497V502M264.5 496V501M265.5 492V497M266.5 491V499M267.5 498V501M268.5 500V502M269.5 501V503M270.5 502V504M271.5 501V506M272.5 496V502M273.5 496V499M274.5 498V502M275.5 500V503M276.5 497V501M277.5 494V498M278.5 492V495M279.5 493V495M280.5 493V496M281.5 487V494M282.5 485V488M283.5 487V496M284.5 495V504M285.5 497V501M286.5 497V498M287.5 496V498M288.5 497V499M289.5 494V498M290.5 493V496M291.5 495V501M292.5 500V504M293.5 496V501M294.5 496V499M295.5 497V500M296.5 494V498M297.5 494V498M298.5 497V505M299.5 491V501M300.5 486V492M301.5 488V492M302.5 490V492M303.5 489V492M304.5 491V496M305.5 495V499M306.5 498V502M307.5 501V504M308.5 502V504M309.5 501V504M310.5 503V510M311.5 506V513M312.5 494V507M313.5 493V501M314.5 500V502M315.5 500V502M316.5 497V501M317.5 495V498M318.5 493V496M319.5 494V497M320.5 496V502M321.5 501V509M322.5 505V512M323.5 496V506M324.5 497V504M325.5 499V503M326.5 496V500M327.5 493V497M328.5 493V500M329.5 495V500M330.5 491V496M331.5 494V501M332.5 500V505M333.5 504V508M334.5 500V506M335.5 495V501M336.5 496V509M337.5 508V515M338.5 508V513M339.5 500V509M340.5 490V501M341.5 493V502M342.5 491V500M343.5 489V495M344.5 494V501M345.5 495V500M346.5 495V497M347.5 496V501M348.5 498V503M349.5 492V502M350.5 497V504M351.5 498V503M352.5 497V501M353.5 500V503M354.5 497V503M355.5 497V506M356.5 494V505M357.5 491V501M358.5 499V503M359.5 494V501M360.5 495V515M361.5 496V504M362.5 498V504M363.5 498V504M364.5 494V506M365.5 497V507M366.5 497V502M367.5 490V504M368.5 491V504M369.5 494V504M370.5 490V503M371.5 495V503M372.5 490V506M373.5 492V508M374.5 490V513M375.5 493V500M376.5 492V496M377.5 494V505M378.5 498V506M379.5 499V501M380.5 490V506M381.5 506V509M382.5 496V507M383.5 495V507M384.5 499V509M385.5 503V507M386.5 506V510M387.5 487V512M388.5 496V508M389.5 496V509M390.5 498V509M391.5 491V499M392.5 491V500M393.5 498V511M394.5 506V515M395.5 494V510M396.5 496V510M397.5 491V497M398.5 490V505M399.5 504V510M400.5 490V510M401.5 490V499M402.5 498V508M403.5 498V507M404.5 500V502M405.5 495V501M406.5 490V496M407.5 492V497M408.5 496V502M409.5 488V508M410.5 503V517M411.5 496V504M412.5 497V499M413.5 498V505M414.5 503V507M415.5 504V512M416.5 490V505M417.5 499V505M418.5 490V503M419.5 490V495M420.5 494V501M421.5 487V500M422.5 495V503M423.5 497V503M424.5 496V498M425.5 497V507M426.5 498V507M427.5 496V506M428.5 497V506M429.5 492V498M430.5 495V508M431.5 507V509M432.5 504V507M433.5 500V505M434.5 499V507M435.5 497V503M436.5 491V506M437.5 494V507M438.5 494V505M439.5 492V521M440.5 493V501M441.5 498V502M442.5 490V499M443.5 490V503M444.5 495V502M445.5 501V506M446.5 492V502M447.5 498V503M448.5 498V505M449.5 496V502M450.5 495V505M451.5 492V502M452.5 491V506M453.5 499V506M454.5 500V502M455.5 501V508M456.5 490V503M457.5 490V500M458.5 497V507M459.5 506V510M460.5 501V511M461.5 500V509M462.5 496V504M463.5 498V505M464.5 491V505M465.5 494V503M466.5 500V504M467.5 493V501M468.5 493V498M469.5 492V502M470.5 500V514M471.5 498V510M472.5 497V501M473.5 495V498M474.5 490V502M475.5 490V501M476.5 491V518M477.5 502V515M478.5 494V506M479.5 497V505M480.5 504V512M481.5 500V510M482.5 502V508M483.5 503V508M484.5 497V506M485.5 496V503M486.5 496V503M487.5 496V506M488.5 499V502M489.5 494V511M490.5 498V509M491.5 496V504M492.5 498V509M493.5 502V509M494.5 491V512M495.5 497V505M496.5 492V504M497.5 494V505M498.5 501V507M499.5 502V512M500.5 499V514M501.5 498V508M502.5 500V507M503.5 499V508M504.5 490V505M505.5 495V513M506.5 491V507M507.5 493V508M508.5 493V507M509.5 498V506M510.5 495V505M511.5 490V501M512.5 494V499M513.5 498V508M514.5 499V510M515.5 496V505M516.5 491V504M517.5 494V507M518.5 498V510M519.5 499V505M520.5 497V504M521.5 494V502M522.5 494V509M523.5 499V509M524.5 493V504M525.5 490V501M526.5 492V510M527.5 492V510M528.5 492V510M529.5 493V510M530.5 496V509M531.5 496V508M532.5 493V506M533.5 498V508M534.5 491V520M535.5 496V510M536.5 499V512M537.5 492V510M538.5 494V506M539.5 493V508M540.5 495V500M541.5 494V511M542.5 497V510M543.5 497V510M544.5 497V510M545.5 501V507M546.5 489V509M547.5 494V507M548.5 494V509M549.5 496V509M550.5 491V502M551.5 495V512M552.5 496V507M553.5 498V505M554.5 498V506M555.5 494V507M556.5 492V509M557.5 493V500M558.5 496V505M559.5 500V504M560.5 496V504M561.5 489V506M562.5 494V506M563.5 489V503M564.5 491V510M565.5 489V502M566.5 495V513M567.5 493V511M568.5 497V508M569.5 491V517M570.5 491V512M571.5 491V507M572.5 491V512M573.5 495V504M574.5 490V510M575.5 491V503M576.5 492V507M577.5 489V510M578.5 499V514M579.5 492V519M580.5 496V513M581.5 490V511M582.5 492V515M583.5 489V509M584.5 498V512M585.5 494V507M586.5 490V505M587.5 492V509M588.5 494V510M589.5 494V503M590.5 495V516M591.5 489V511M592.5 491V507M593.5 496V514M594.5 490V504M595.5 490V506M596.5 493V512M597.5 495V512M598.5 495V504M599.5 493V519M600.5 493V509M601.5 491V511M602.5 491V504M603.5 496V514M604.5 496V511M605.5 488V500M606.5 493V509M607.5 497V512M608.5 494V511M609.5 490V515M610.5 485V510M611.5 493V510M612.5 489V518M613.5 495V514M614.5 493V510M615.5 491V511M616.5 495V513M617.5 491V513M618.5 488V512M619.5 493V515M620.5 493V511M621.5 490V513M622.5 496V509M623.5 499V511M624.5 486V510M625.5 490V511M626.5 494V519M627.5 493V519M628.5 496V512M629.5 491V507M630.5 490V512M631.5 489V506M632.5 493V512M633.5 492V504M634.5 494V507M635.5 496V509M636.5 494V504M637.5 497V512M638.5 493V511M639.5 489V514M640.5 493V505M641.5 497V508M642.5 494V509M643.5 488V510M644.5 494V512M645.5 492V504M646.5 494V506M647.5 491V501M648.5 491V513M649.5 492V512M650.5 494V507M651.5 495V512M652.5 490V509M653.5 495V514M654.5 494V512M655.5 491V516M656.5 493V509M657.5 490V515M658.5 494V507M659.5 492V523M660.5 494V508M661.5 492V512M662.5 489V511M663.5 495V509M664.5 489V515M665.5 491V513M666.5 495V514M667.5 491V505M668.5 493V505M669.5 493V512M670.5 492V509M671.5 486V506M672.5 493V512M673.5 491V516M674.5 490V510M675.5 491V508M676.5 494V513M677.5 492V506M678.5 491V510M679.5 492V506M680.5 493V515M681.5 492V509M682.5 492V509M683.5 492V509M684.5 490V507M685.5 494V506M686.5 490V516M687.5 493V509M688.5 492V512M689.5 493V504M690.5 489V520M691.5 495V512M692.5 484V512M693.5 496V507M694.5 488V512M695.5 491V508M696.5 492V506M697.5 494V516M698.5 489V511M699.5 485V512M700.5 489V506M701.5 491V515M702.5 490V508M703.5 490V514M704.5 489V513M705.5 493V510M706.5 493V517M707.5 492V516M708.5 494V507M709.5 494V515M710.5 492V510M711.5 491V508M712.5 493V511M713.5 492V519M714.5 491V509M715.5 492V515M716.5 489V509M717.5 494V510M718.5 490V515M719.5 489V511M720.5 493V514M721.5 492V508M722.5 491V511M723.5 491V510M724.5 493V511M725.5 493V515M726.5 494V511M727.5 489V510M728.5 492V511M729.5 491V507M730.5 491V511M731.5 488V511M732.5 496V514M733.5 491V510M734.5 489V509M735.5 476V512M736.5 436V477M737.5 299V437M738.5 198V417M739.5 416V471M740.5 470V494M741.5 487V518M742.5 495V511M743.5 493V519M744.5 488V511M745.5 486V507M746.5 490V510M747.5 489V506M748.5 490V511M749.5 494V508M750.5 492V517M751.5 493V517M752.5 493V518M753.5 493V512M754.5 491V512M755.5 492V507M756.5 489V508M757.5 493V512M758.5 491V515M759.5 493V515M760.5 493V512M761.5 490V514M762.5 491V521M763.5 494V512M764.5 489V511M765.5 490V510M766.5 491V518M767.5 488V509M768.5 486V513M769.5 494V512M770.5 487V514M771.5 492V509M772.5 492V513M773.5 487V517M774.5 489V521M775.5 492V513M776.5 490V515M777.5 490V511M778.5 490V516M779.5 492V516M780.5 493V509M781.5 490V513M782.5 491V508M783.5 490V513M784.5 494V513M785.5 491V508M786.5 493V513M787.5 486V512M788.5 492V513M789.5 491V515M790.5 489V511M791.5 491V513M792.5 493V514M793.5 489V515M794.5 490V524M795.5 491V514M796.5 492V509M797.5 494V513M798.5 489V511M799.5 491V508M800.5 492V515M801.5 492V508M802.5 490V512M803.5 492V512M804.5 490V510M805.5 492V515M806.5 493V514M807.5 491V509M808.5 491V515M809.5 488V514M810.5 492V514M811.5 490V515M812.5 490V513M813.5 492V523M814.5 491V517M815.5 487V515M816.5 490V509M817.5 493V513M818.5 489V514M819.5 489V510M820.5 491V505M821.5 490V513M822.5 492V515M823.5 491V516M824.5 490V513M825.5 488V513M826.5 491V514M827.5 489V513M828.5 490V512M829.5 484V510M830.5 489V509M831.5 489V518M832.5 492V512M833.5 492V522M834.5 492V522M835.5 491V527M836.5 487V517M837.5 491V511M838.5 492V510M839.5 492V509M840.5 493V513M841.5 491V512M842.5 488V514M843.5 491V512M844.5 492V514M845.5 489V506M846.5 489V510M847.5 493V514M848.5 490V514M849.5 488V511M850.5 490V521M851.5 491V517M852.5 491V508M853.5 491V513M854.5 492V511M855.5 490V510M856.5 493V512M857.5 471V509M858.5 489V513M859.5 491V511M860.5 493V515M861.5 488V512M862.5 489V517M863.5 487V513M864.5 493V515M865.5 490V512M866.5 489V512M867.5 492V510M868.5 491V511M869.5 491V516M870.5 485V511M871.5 490V511M872.5 493V518M873.5 491V513M874.5 489V515M875.5 490V515M876.5 490V516M877.5 489V522M878.5 490V508M879.5 490V514M880.5 489V515M881.5 491V511M882.5 489V521M883.5 488V510M884.5 489V508M885.5 490V515M886.5 488V512M887.5 490V509M888.5 492V512M889.5 493V514M890.5 488V513M891.5 491V518M892.5 485V511M893.5 485V518M894.5 490V516M895.5 493V515M896.5 489V513M897.5 493V514M898.5 488V515M899.5 496V514M900.5 492V512M901.5 493V514M902.5 493V509M903.5 488V515M904.5 488V514M905.5 491V508M906.5 490V510M907.5 490V514M908.5 492V513M909.5 490V511M910.5 490V515M911.5 491V511M912.5 490V516M913.5 491V516M914.5 488V521M915.5 488V512M916.5 490V518M917.5 490V518M918.5 489V513M919.5 487V512M920.5 489V513M921.5 488V513M922.5 489V515M923.5 492V524M924.5 489V517M925.5 489V513M926.5 488V510M927.5 492V514M928.5 487V513M929.5 490V518M930.5 491V513M931.5 489V515M932.5 491V518M933.5 488V516M934.5 490V511M935.5 491V515M936.5 489V516M937.5 489V511M938.5 488V519M939.5 491V521M940.5 492V516M941.5 490V519M942.5 491V513M943.5 488V512M944.5 489V517M945.5 493V515M946.5 491V516M947.5 491V515M948.5 489V512M949.5 484V515M950.5 490V511M951.5 491V514M952.5 490V515M953.5 487V513M954.5 489V514M955.5 487V517M956.5 487V522M957.5 488V510M958.5 490V519M959.5 488V516M960.5 489V515M961.5 490V516M962.5 493V512M963.5 489V510M964.5 489V514M965.5 490V514M966.5 487V517M967.5 490V510M968.5 490V525M969.5 490V511M970.5 485V516M971.5 491V515M972.5 489V517M973.5 487V510M974.5 491V512M975.5 488V515M976.5 490V514M977.5 487V510M978.5 487V515M979.5 489V513M980.5 490V514M981.5 488V513M982.5 489V515M983.5 490V522M984.5 489V520M985.5 488V518M986.5 490V514M987.5 489V517M988.5 487V517M989.5 489V516M990.5 491V515M991.5 493V518M992.5 490V512M993.5 489V516M994.5 489V516M995.5 489V515M996.5 490V513M997.5 490V516M998.5 489V516M999.5 489V516M1000.5 491V524M1001.5 489V519M1002.5 489V516M1003.5 490V517M1004.5 489V515M1005.5 490V512M1006.5 490V512M1007.5 489V513M1008.5 490V518M1009.5 489V515M1010.5 485V520M1011.5 485V510M1012.5 488V513M1013.5 490V517M1014.5 491V514M1015.5 488V511M1016.5 491V519M1017.5 491V516M1018.5 489V516M1019.5 492V512M1020.5 491V517M1021.5 488V514M1022.5 487V512M1023.5 489V516M1024.5 488V514M1025.5 490V516M1026.5 488V518M1027.5 492V516M1028.5 488V515M1029.5 489V515M1030.5 492V513M1031.5 491V513M1032.5 488V515M1033.5 492V523M1034.5 487V521M1035.5 490V520M1036.5 490V521M1037.5 489V514M1038.5 487V516M1039.5 489V514M1040.5 488V514M1041.5 491V521M1042.5 489V513M1043.5 488V519M1044.5 484V518M1045.5 490V512M1046.5 488V511M1047.5 490V513M1048.5 489V517M1049.5 489V519M1050.5 489V515M1051.5 491V521M1052.5 491V515M1053.5 489V514M1054.5 487V512M1055.5 485V516M1056.5 490V515M1057.5 488V514M1058.5 488V519M1059.5 487V519M1060.5 490V516M1061.5 487V519M1062.5 488V517M1063.5 491V517M1064.5 490V523M1065.5 488V513M1066.5 487V526M1067.5 489V515M1068.5 489V515M1069.5 485V511M1070.5 488V513M1071.5 487V513M1072.5 489V512M1073.5 490V514M1074.5 488V519M1075.5 489V519M1076.5 491V516M1077.5 489V516M1078.5 487V516M1079.5 488V512M1080.5 490V517M1081.5 489V517M1082.5 488V519M1083.5 485V516M1084.5 489V517M1085.5 489V517M1086.5 489V513M1087.5 488V517M1088.5 489V513M1089.5 490V527M1090.5 490V519M1091.5 490V517M1092.5 490V515M1093.5 489V520M1094.5 488V517M1095.5 487V513M1096.5 489V518M1097.5 488V516M1098.5 490V513M1099.5 488V514M1100.5 489V518M1101.5 487V520M1102.5 487V516M1103.5 487V517M1104.5 487V522M1105.5 488V518M1106.5 488V526M1107.5 488V514M1108.5 490V512M1109.5 488V517M1110.5 488V516M1111.5 490V516M1112.5 489V519M1113.5 490V517M1114.5 489V517M1115.5 490V521M1116.5 489V517M1117.5 490V519M1118.5 487V519M1119.5 489V519M1120.5 490V518M1121.5 488V518M1122.5 489V518M1123.5 491V520M1124.5 488V516M1125.5 488V515M1126.5 488V524M1127.5 490V518M1128.5 485V517M1129.5 488V513M1130.5 487V517M1131.5 489V513M1132.5 486V516M1133.5 489V517M1134.5 488V517M1135.5 490V518M1136.5 491V522M1137.5 480V523M1138.5 488V518M1139.5 491V518M1140.5 489V517M1141.5 489V513M1142.5 488V517M1143.5 486V519M1144.5 488V521M1145.5 487V514M1146.5 487V518M1147.5 488V524M1148.5 488V513M1149.5 489V520M1150.5 487V515M1151.5 487V516M1152.5 488V516M1153.5 475V515M1154.5 487V516M1155.5 488V514M1156.5 489V520M1157.5 486V517M1158.5 487V516M1159.5 490V517M1160.5 488V515M1161.5 490V515M1162.5 489V515M1163.5 488V519M1164.5 490V516M1165.5 488V518M1166.5 488V516M1167.5 474V515M1168.5 489V514M1169.5 490V518M1170.5 488V523M1171.5 488V515M1172.5 489V517M1173.5 489V517M1174.5 490V525M1175.5 469V526M1176.5 488V515M1177.5 489V521M1178.5 488V517M1179.5 489V514M1180.5 489V523M1181.5 480V516M1182.5 490V518M1183.5 488V526M1184.5 489V520M1185.5 487V519M1186.5 488V519M1187.5 487V518M1188.5 468V516M1189.5 489V518M1190.5 489V515M1191.5 488V517M1192.5 489V517M1193.5 488V514M1194.5 489V515M1195.5 488V517M1196.5 487V519M1197.5 488V514M1198.5 483V516M1199.5 489V516M1200.5 490V516M1201.5 486V518M1202.5 490V516M1203.5 488V518M1204.5 488V513M1205.5 478V513M1206.5 489V517M1207.5 489V514M1208.5 487V514M1209.5 483V514M1210.5 489V513M1211.5 469V516M1212.5 490V520M1213.5 488V516M1214.5 488V519M1215.5 487V513M1216.5 463V514M1217.5 486V513M1218.5 488V514M1219.5 487V519M1220.5 477V519M1221.5 487V514M1222.5 455V512M1223.5 488V511M1224.5 489V514M1225.5 488V512M1226.5 456V514M1227.5 490V516M1228.5 480V512M1229.5 488V514M1230.5 482V516M1231.5 489V511M1232.5 458V513M1233.5 488V515M1234.5 484V516M1235.5 488V510M1236.5 454V521M1237.5 490V512M1238.5 477V513M1239.5 486V511M1240.5 488V515M1241.5 488V511M1242.5 489V513M1243.5 488V513M1244.5 487V511M1245.5 456V510M1246.5 488V511M1247.5 488V513M1248.5 480V509M1249.5 489V510M1250.5 453V511M1251.5 489V508" stroke="#000" stroke-width="1" fill="none"/>
<rect x="926" y="148" width="1" height="506" fill="#c0c000"/>
</svg>
</body></html>
